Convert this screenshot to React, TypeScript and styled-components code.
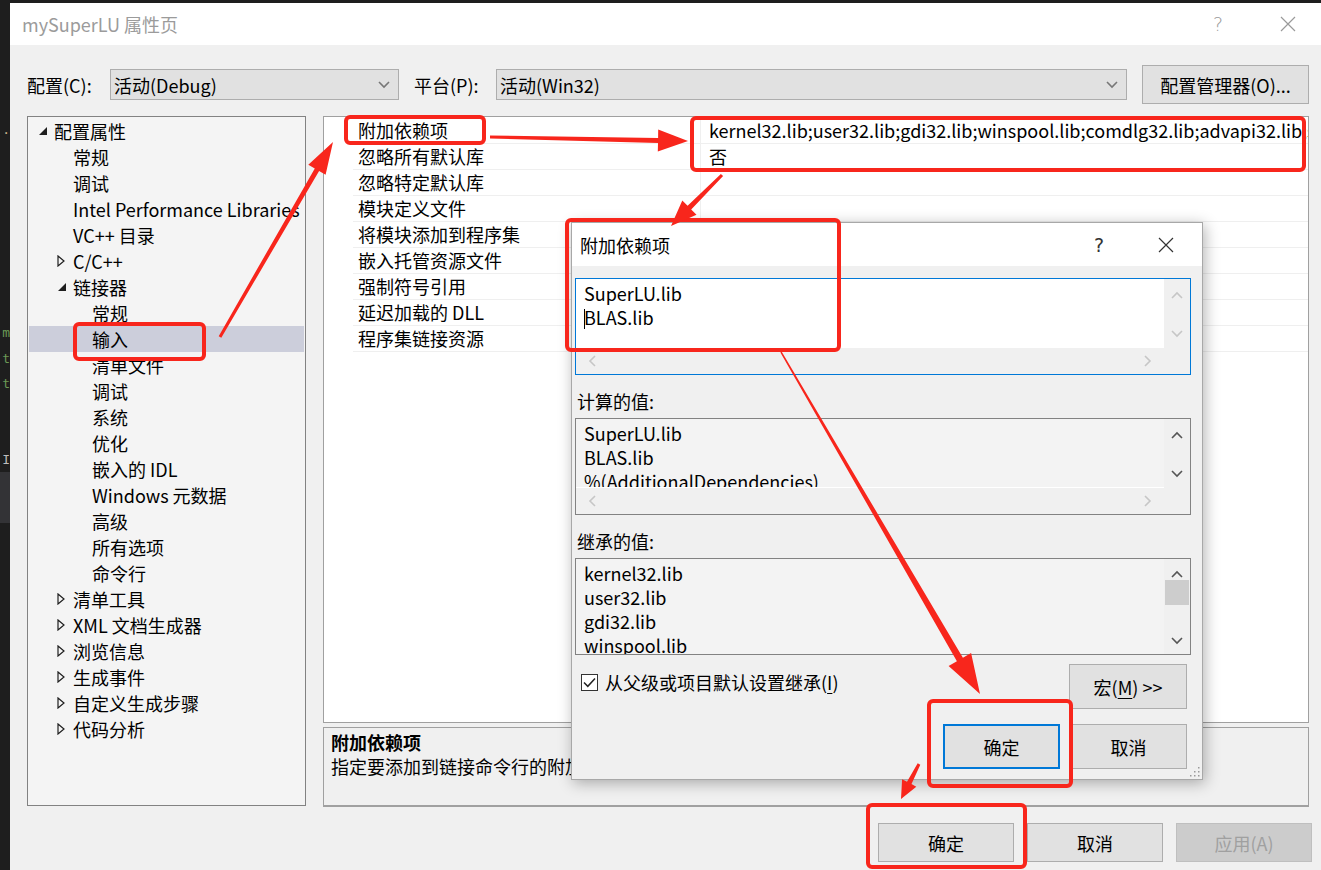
import React from "react";
import styled, { createGlobalStyle } from "styled-components";

const FONT = `"Noto Sans CJK SC", "Noto Sans", sans-serif`;
const RED = "#f8261c";

const GlobalStyle = createGlobalStyle`
  html, body {
    margin: 0;
    padding: 0;
    background: #1e1e1e;
  }
  body {
    font-family: ${FONT};
  }
`;

interface TreeItem {
  level: number;
  text: string;
  arrow?: "open" | "closed";
  selected?: boolean;
}

const treeItems: TreeItem[] = [
  { level: 0, text: "配置属性", arrow: "open" },
  { level: 1, text: "常规" },
  { level: 1, text: "调试" },
  { level: 1, text: "Intel Performance Libraries" },
  { level: 1, text: "VC++ 目录" },
  { level: 1, text: "C/C++", arrow: "closed" },
  { level: 1, text: "链接器", arrow: "open" },
  { level: 2, text: "常规" },
  { level: 2, text: "输入", selected: true },
  { level: 2, text: "清单文件" },
  { level: 2, text: "调试" },
  { level: 2, text: "系统" },
  { level: 2, text: "优化" },
  { level: 2, text: "嵌入的 IDL" },
  { level: 2, text: "Windows 元数据" },
  { level: 2, text: "高级" },
  { level: 2, text: "所有选项" },
  { level: 2, text: "命令行" },
  { level: 1, text: "清单工具", arrow: "closed" },
  { level: 1, text: "XML 文档生成器", arrow: "closed" },
  { level: 1, text: "浏览信息", arrow: "closed" },
  { level: 1, text: "生成事件", arrow: "closed" },
  { level: 1, text: "自定义生成步骤", arrow: "closed" },
  { level: 1, text: "代码分析", arrow: "closed" },
];

const gridRows: { name: string; value: string }[] = [
  {
    name: "附加依赖项",
    value:
      "kernel32.lib;user32.lib;gdi32.lib;winspool.lib;comdlg32.lib;advapi32.lib;shell32.lib;ole32.lib;oleaut32.lib;uuid.lib;odbc32.lib;odbccp32.lib;%(AdditionalDependencies)",
  },
  { name: "忽略所有默认库", value: "否" },
  { name: "忽略特定默认库", value: "" },
  { name: "模块定义文件", value: "" },
  { name: "将模块添加到程序集", value: "" },
  { name: "嵌入托管资源文件", value: "" },
  { name: "强制符号引用", value: "" },
  { name: "延迟加载的 DLL", value: "" },
  { name: "程序集链接资源", value: "" },
];

// the sliver of the code editor behind the window
const codeLines: { text: string; color?: string; band?: boolean }[] = [
  { text: ".", color: "#c8b08a" },
  { text: "" }, { text: "" }, { text: "" }, { text: "" }, { text: "" }, { text: "" }, { text: "" },
  { text: "m", color: "#6a9955" },
  { text: "t", color: "#6a9955" },
  { text: "t", color: "#6a9955" },
  { text: "" },
  { text: "" },
  { text: "I", color: "#bdbdbd" },
  { text: "", band: true },
  { text: "", band: true },
];

// arrow polygon from tail to tip, tapered shaft + triangular head
const arrowPoints = (
  x1: number, y1: number, x2: number, y2: number,
  w1: number, w2: number, headLen: number, headW: number
): string => {
  const dx = x2 - x1;
  const dy = y2 - y1;
  const len = Math.sqrt(dx * dx + dy * dy);
  const ux = dx / len;
  const uy = dy / len;
  const nx = -uy;
  const ny = ux;
  const bx = x2 - ux * headLen;
  const by = y2 - uy * headLen;
  const pts = [
    [x1 + (nx * w1) / 2, y1 + (ny * w1) / 2],
    [bx + (nx * w2) / 2, by + (ny * w2) / 2],
    [bx + (nx * headW) / 2, by + (ny * headW) / 2],
    [x2, y2],
    [bx - (nx * headW) / 2, by - (ny * headW) / 2],
    [bx - (nx * w2) / 2, by - (ny * w2) / 2],
    [x1 - (nx * w1) / 2, y1 - (ny * w1) / 2],
  ];
  return pts.map((p) => `${p[0].toFixed(1)},${p[1].toFixed(1)}`).join(" ");
};

const redBoxes = [
  [344, 115, 486, 145],
  [690, 116, 1306, 172],
  [565, 218, 841, 352],
  [73, 322, 206, 361],
  [927, 699, 1073, 788],
  [866, 803, 1027, 869],
];

const redArrows: number[][] = [
  [220, 337, 333, 142, 3, 5, 32, 20],
  [490, 137, 688, 141, 3, 5, 30, 22],
  [722, 175, 671, 226, 3, 5, 26, 20],
  [781, 352, 980, 694, 1.5, 7, 40, 26],
  [919, 764, 901, 799, 3, 5, 18, 16],
];

const Chevron = ({ dir, color }: { dir: "up" | "down" | "left" | "right"; color: string }) => {
  const d = {
    up: "M1 7 L6 2 L11 7",
    down: "M1 2 L6 7 L11 2",
    left: "M7 1 L2 6 L7 11",
    right: "M2 1 L7 6 L2 11",
  }[dir];
  const horiz = dir === "left" || dir === "right";
  return (
    <svg width={horiz ? 9 : 12} height={horiz ? 12 : 9} viewBox={horiz ? "0 0 9 12" : "0 0 12 9"}>
      <path d={d} fill="none" stroke={color} strokeWidth={1.6} />
    </svg>
  );
};

const CloseGlyph = ({ color }: { color: string }) => (
  <svg width="16" height="16" viewBox="0 0 16 16">
    <path d="M1 1 L15 15 M15 1 L1 15" stroke={color} strokeWidth="1.2" fill="none" />
  </svg>
);

const TreeArrow = ({ open }: { open: boolean }) =>
  open ? (
    <svg width="10" height="10" viewBox="0 0 10 10">
      <polygon points="9,1 9,9 1,9" fill="#1e1e1e" />
    </svg>
  ) : (
    <svg width="8" height="12" viewBox="0 0 8 12">
      <polygon points="1,1 7,6 1,11" fill="none" stroke="#1e1e1e" strokeWidth="1.2" />
    </svg>
  );

const App = () => {
  return (
    <Screen>
      <GlobalStyle />
      <EditorStrip>
        {codeLines.map((l, i) => (
          <CodeLine key={i} $color={l.color} $band={l.band}>
            <span>{l.text}</span>
          </CodeLine>
        ))}
      </EditorStrip>

      <Window>
        <TitleBar>
          <TitleText>mySuperLU 属性页</TitleText>
          <TitleHelp>?</TitleHelp>
          <TitleClose>
            <CloseGlyph color="#9a9a9a" />
          </TitleClose>
        </TitleBar>

        <Body>
          <ConfigRow>
            <ConfigLabel $w={83}>配置(C):</ConfigLabel>
            <Select $w={289}>
              <span>活动(Debug)</span>
              <Chevron dir="down" color="#777" />
            </Select>
            <ConfigLabel $w={82} $ml={15}>平台(P):</ConfigLabel>
            <Select $w={631}>
              <span>活动(Win32)</span>
              <Chevron dir="down" color="#777" />
            </Select>
            <Button $w={167} $h={39} $ml={15}>配置管理器(O)...</Button>
          </ConfigRow>

          <MainArea>
            <TreePanel>
              {treeItems.map((item, i) => (
                <TreeRow key={i} $level={item.level} $selected={item.selected}>
                  <ArrowSlot>{item.arrow && <TreeArrow open={item.arrow === "open"} />}</ArrowSlot>
                  <TreeText>{item.text}</TreeText>
                </TreeRow>
              ))}
            </TreePanel>

            <RightColumn>
              <GridPanel>
                {gridRows.map((r, i) => (
                  <GridRow key={i}>
                    <Gutter />
                    <NameCell>{r.name}</NameCell>
                    <ValueCell>{r.value}</ValueCell>
                  </GridRow>
                ))}
              </GridPanel>
              <DescPanel>
                <DescTitle>附加依赖项</DescTitle>
                <DescText>指定要添加到链接命令行的附加项；例如 kernel32.lib</DescText>
              </DescPanel>
            </RightColumn>
          </MainArea>

          <Footer>
            <Button $w={136} $h={39}>确定</Button>
            <Button $w={136} $h={39}>取消</Button>
            <Button $w={136} $h={39} disabled>应用(A)</Button>
          </Footer>
        </Body>
      </Window>

      <Dialog>
        <DialogTitle>
          <DialogTitleText>附加依赖项</DialogTitleText>
          <DialogHelp>?</DialogHelp>
          <DialogClose>
            <CloseGlyph color="#333" />
          </DialogClose>
        </DialogTitle>
        <DialogBody>
          <ListBox $focused $hscroll>
            <ListText $bg="#fff">
              <div>SuperLU.lib</div>
              <div>
                <Caret />BLAS.lib
              </div>
            </ListText>
            <VScroll>
              <Chevron dir="up" color="#c6c6c6" />
              <Chevron dir="down" color="#c6c6c6" />
            </VScroll>
            <HScroll>
              <Chevron dir="left" color="#c6c6c6" />
              <Chevron dir="right" color="#c6c6c6" />
            </HScroll>
          </ListBox>

          <FieldLabel>计算的值:</FieldLabel>
          <ListBox $hscroll>
            <ListText $bg="#f3f3f3" $divider>
              <div>SuperLU.lib</div>
              <div>BLAS.lib</div>
              <div>%(AdditionalDependencies)</div>
            </ListText>
            <VScroll>
              <Chevron dir="up" color="#555" />
              <Chevron dir="down" color="#555" />
            </VScroll>
            <HScroll>
              <Chevron dir="left" color="#c6c6c6" />
              <Chevron dir="right" color="#c6c6c6" />
            </HScroll>
          </ListBox>

          <FieldLabel>继承的值:</FieldLabel>
          <ListBox>
            <ListText $bg="#f3f3f3">
              <div>kernel32.lib</div>
              <div>user32.lib</div>
              <div>gdi32.lib</div>
              <div>winspool.lib</div>
            </ListText>
            <VScroll $thumb>
              <Chevron dir="up" color="#555" />
              <Thumb />
              <Chevron dir="down" color="#555" />
            </VScroll>
          </ListBox>

          <CheckRow>
            <CheckLabel>
              <CheckBox>
                <svg width="13" height="11" viewBox="0 0 13 11">
                  <path d="M1 5.5 L4.8 9.3 L12 1.5" fill="none" stroke="#222" strokeWidth="1.5" />
                </svg>
              </CheckBox>
              <span>
                从父级或项目默认设置继承(<u>I</u>)
              </span>
            </CheckLabel>
            <Button $w={118} $h={45}>
              宏(<u>M</u>) &gt;&gt;
            </Button>
          </CheckRow>

          <DialogButtons>
            <Button $w={117} $h={45} $primary>确定</Button>
            <Button $w={117} $h={45}>取消</Button>
          </DialogButtons>
        </DialogBody>
        <Grip>
          <svg width="12" height="12" viewBox="0 0 12 12">
            {[[10, 2], [10, 6], [6, 6], [10, 10], [6, 10], [2, 10]].map(([x, y], i) => (
              <rect key={i} x={x} y={y} width="1.5" height="1.5" fill="#999" />
            ))}
          </svg>
        </Grip>
      </Dialog>

      <Annotations width="1321" height="870" viewBox="0 0 1321 870">
        {redBoxes.map(([x1, y1, x2, y2], i) => (
          <rect
            key={i}
            x={x1 + 2}
            y={y1 + 2}
            width={x2 - x1 - 4}
            height={y2 - y1 - 4}
            rx="4"
            fill="none"
            stroke={RED}
            strokeWidth="4"
          />
        ))}
        {redArrows.map((a, i) => (
          <polygon
            key={i}
            points={arrowPoints(a[0], a[1], a[2], a[3], a[4], a[5], a[6], a[7])}
            fill={RED}
          />
        ))}
      </Annotations>
    </Screen>
  );
};

const Screen = styled.div`
  position: relative;
  width: 1321px;
  height: 870px;
  overflow: hidden;
  display: flex;
  background: #1e1e1e;
  font-family: ${FONT};
  font-size: 18px;
  color: #000;
`;

const EditorStrip = styled.div`
  width: 10px;
  flex: none;
  padding-top: 117px;
  display: flex;
  flex-direction: column;
  overflow: hidden;
`;

const CodeLine = styled.div<{ $color?: string; $band?: boolean }>`
  height: 25.4px;
  line-height: 25.4px;
  display: flex;
  justify-content: flex-end;
  font-family: "DejaVu Sans Mono", monospace;
  font-size: 13px;
  white-space: pre;
  color: ${(p) => p.$color || "#ccc"};
  background: ${(p) => (p.$band ? "#333336" : "transparent")};

  span {
    flex: none;
  }
`;

const Window = styled.div`
  flex: 1;
  min-width: 0;
  margin-top: 3px;
  display: flex;
  flex-direction: column;
  background: #f0f0f0;
`;

const TitleBar = styled.div`
  height: 42px;
  flex: none;
  background: #fff;
  display: flex;
  align-items: center;
  padding: 0 13px 0 12px;
`;

const TitleText = styled.div`
  flex: 1;
  color: #9b9b9b;
  font-size: 18px;
`;

const TitleHelp = styled.div`
  width: 30px;
  text-align: center;
  color: #9a9a9a;
  font-size: 19px;
  font-family: "DejaVu Sans", sans-serif;
  font-weight: 300;
`;

const TitleClose = styled.div`
  width: 40px;
  margin-left: 35px;
  display: flex;
  justify-content: center;
`;

const Body = styled.div`
  flex: 1;
  display: flex;
  flex-direction: column;
  padding: 20px 12px 0 17px;
`;

const ConfigRow = styled.div`
  height: 39px;
  display: flex;
  align-items: center;
`;

const ConfigLabel = styled.div<{ $w: number; $ml?: number }>`
  width: ${(p) => p.$w}px;
  margin-left: ${(p) => p.$ml || 0}px;
  flex: none;
  white-space: nowrap;
`;

const Select = styled.div<{ $w: number }>`
  width: ${(p) => p.$w}px;
  height: 31px;
  flex: none;
  box-sizing: border-box;
  border: 1px solid #adadad;
  background: #e1e1e1;
  display: flex;
  align-items: center;
  justify-content: space-between;
  padding: 0 8px 0 3px;
`;

const Button = styled.button<{ $w: number; $h: number; $primary?: boolean; $ml?: number }>`
  width: ${(p) => p.$w}px;
  height: ${(p) => p.$h}px;
  margin-left: ${(p) => p.$ml || 0}px;
  flex: none;
  box-sizing: border-box;
  padding: 0;
  background: #e1e1e1;
  border: ${(p) => (p.$primary ? "2px solid #0078d7" : "1px solid #adadad")};
  font-family: ${FONT};
  font-size: 18px;
  color: #000;
  white-space: nowrap;

  u {
    text-underline-offset: 3px;
  }

  &:disabled {
    background: #cccccc;
    border-color: #bfbfbf;
    color: #a0a0a0;
  }
`;

const MainArea = styled.div`
  margin-top: 12px;
  height: 691px;
  display: grid;
  grid-template-columns: 279px 986px;
  column-gap: 17px;
`;

const TreePanel = styled.div`
  height: 690px;
  box-sizing: border-box;
  border: 1px solid #828282;
  background: #f4f4f4;
  padding-top: 1px;
  overflow: hidden;
`;

const TreeRow = styled.div<{ $level: number; $selected?: boolean }>`
  height: 26px;
  display: flex;
  align-items: center;
  padding-left: ${(p) => 9 + 19 * p.$level}px;
  margin: 0 1px;
  background: ${(p) => (p.$selected ? "#cccedb" : "transparent")};
`;

const ArrowSlot = styled.div`
  width: 16px;
  flex: none;
  display: flex;
  align-items: center;
`;

const TreeText = styled.div`
  white-space: nowrap;
  line-height: 26px;
`;

const RightColumn = styled.div`
  display: flex;
  flex-direction: column;
  gap: 4px;
`;

const GridPanel = styled.div`
  height: 607px;
  box-sizing: border-box;
  border: 1px solid #a0a0a0;
  background: #fff;
  padding-top: 1px;
  overflow: hidden;
`;

const GridRow = styled.div`
  display: grid;
  grid-template-columns: 29px 347px 1fr;
  height: 26px;
`;

const Gutter = styled.div``;

const NameCell = styled.div`
  border-bottom: 1px solid #efefef;
  padding-left: 5px;
  line-height: 25px;
  white-space: nowrap;
`;

const ValueCell = styled.div`
  border-bottom: 1px solid #efefef;
  border-left: 1px solid #efefef;
  padding-left: 8px;
  line-height: 25px;
  white-space: nowrap;
  overflow: hidden;
`;

const DescPanel = styled.div`
  height: 80px;
  box-sizing: border-box;
  border: 1px solid #a0a0a0;
  border-bottom-width: 2px;
  padding: 2px 7px;
  line-height: 24px;
  overflow: hidden;
`;

const DescTitle = styled.div`
  font-weight: 700;
`;

const DescText = styled.div`
  white-space: nowrap;
`;

const Footer = styled.div`
  margin-top: 16px;
  margin-right: -3px;
  display: flex;
  justify-content: flex-end;
  gap: 13px;
`;

const Dialog = styled.div`
  position: absolute;
  left: 571px;
  top: 222px;
  width: 632px;
  height: 558px;
  box-sizing: border-box;
  border: 1px solid #a8a8a8;
  background: #f0f0f0;
  box-shadow: 2px 3px 14px rgba(0, 0, 0, 0.3);
  display: flex;
  flex-direction: column;
`;

const DialogTitle = styled.div`
  height: 43px;
  flex: none;
  background: #fff;
  display: flex;
  align-items: center;
  padding: 0 28px 0 8px;
`;

const DialogTitleText = styled.div`
  flex: 1;
`;

const DialogHelp = styled.div`
  width: 20px;
  text-align: center;
  font-size: 19px;
  font-family: "DejaVu Sans", sans-serif;
  color: #333;
`;

const DialogClose = styled.div`
  margin-left: 49px;
  display: flex;
`;

const DialogBody = styled.div`
  flex: 1;
  display: flex;
  flex-direction: column;
  padding: 12px 11px 0 3px;
`;

const ListBox = styled.div<{ $focused?: boolean; $hscroll?: boolean }>`
  height: 97px;
  box-sizing: border-box;
  border: 1px solid ${(p) => (p.$focused ? "#0078d7" : "#828282")};
  background: #f0f0f0;
  display: grid;
  grid-template-columns: 1fr 26px;
  grid-template-rows: ${(p) => (p.$hscroll ? "69px 1fr" : "1fr")};
  overflow: hidden;
`;

const ListText = styled.div<{ $bg: string; $divider?: boolean }>`
  background: ${(p) => p.$bg};
  padding: 2px 0 0 8px;
  line-height: 24px;
  overflow: hidden;
  white-space: nowrap;
  border-bottom: ${(p) => (p.$divider ? "1px solid #fff" : "none")};
`;

const VScroll = styled.div<{ $thumb?: boolean }>`
  display: flex;
  flex-direction: column;
  align-items: center;
  justify-content: space-between;
  padding: ${(p) => (p.$thumb ? "11px 0 9px" : "12px 0 10px")};
`;

const Thumb = styled.div`
  width: 24px;
  height: 25px;
  margin-top: -16px;
  margin-bottom: 14px;
  background: #cdcdcd;
`;

const HScroll = styled.div`
  display: flex;
  align-items: center;
  justify-content: space-between;
  padding: 0 12px 0 12px;
`;

const Caret = styled.span`
  display: inline-block;
  width: 1px;
  height: 20px;
  background: #000;
  vertical-align: -4px;
  margin-right: -1px;
`;

const FieldLabel = styled.div`
  margin-top: 14px;
  margin-bottom: 5px;
  height: 24px;
  line-height: 24px;
  padding-left: 2px;
`;

const CheckRow = styled.div`
  margin-top: 9px;
  height: 45px;
  display: flex;
  justify-content: space-between;
  align-items: flex-start;
  margin-right: 4px;
`;

const CheckLabel = styled.label`
  margin-top: 3px;
  margin-left: 6px;
  height: 30px;
  display: flex;
  align-items: center;
  gap: 7px;

  u {
    text-underline-offset: 3px;
  }
`;

const CheckBox = styled.span`
  width: 17px;
  height: 17px;
  box-sizing: border-box;
  border: 1px solid #333;
  background: #fff;
  display: flex;
  align-items: center;
  justify-content: center;
`;

const DialogButtons = styled.div`
  margin-top: 15px;
  margin-right: 4px;
  display: flex;
  justify-content: flex-end;
  gap: 10px;
`;

const Grip = styled.div`
  position: absolute;
  right: 2px;
  bottom: 2px;
  display: flex;
`;

const Annotations = styled.svg`
  position: absolute;
  left: 0;
  top: 0;
  pointer-events: none;
`;

export default App;
